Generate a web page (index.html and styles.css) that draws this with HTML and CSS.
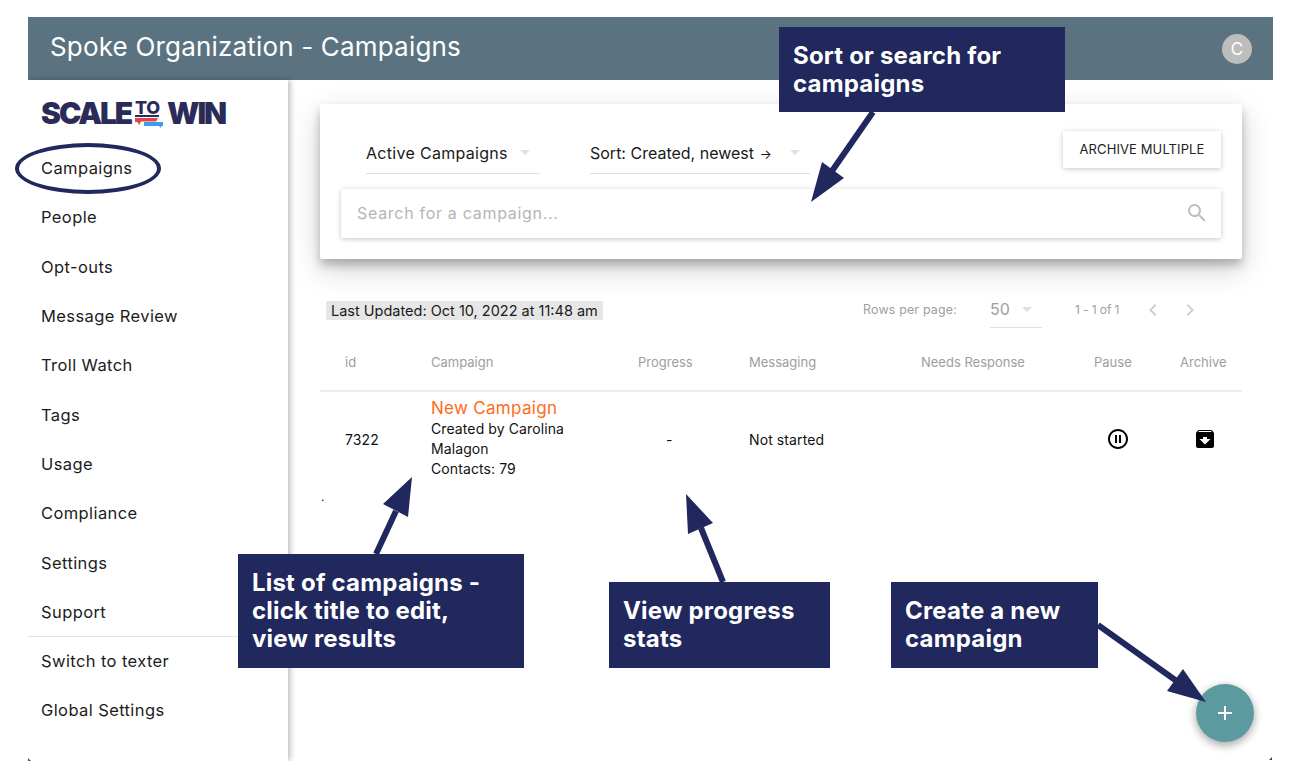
FILE: index.html
```html
<!DOCTYPE html>
<html lang="en">
<head>
<meta charset="utf-8">
<title>Spoke Organization - Campaigns</title>
<link rel="stylesheet" href="styles.css">
</head>
<body>
<div class="frame">
  <header class="topbar">
    <h1 class="title">Spoke Organization - Campaigns</h1>
    <span class="avatar">C</span>
  </header>
  <div class="layout">
    <aside class="sidebar">
      <div class="logo">
        <span class="logo-word">SCALE</span>
        <span class="logo-to">
          <span class="logo-to-text">TO</span>
          <svg class="logo-bubbles" viewBox="0 0 28 10" width="28" height="10" aria-hidden="true">
            <path d="M0 0H23L21 3.5H6L4 7L2.5 4H0Z" fill="#e2434b"/>
            <path d="M9 4H28V8H26V10L24 8H9Z" fill="#3d9be9"/>
          </svg>
        </span>
        <span class="logo-word">WIN</span>
      </div>
      <nav class="nav">
        <a class="nav-item">Campaigns</a>
        <a class="nav-item">People</a>
        <a class="nav-item">Opt-outs</a>
        <a class="nav-item">Message Review</a>
        <a class="nav-item">Troll Watch</a>
        <a class="nav-item">Tags</a>
        <a class="nav-item">Usage</a>
        <a class="nav-item">Compliance</a>
        <a class="nav-item">Settings</a>
        <a class="nav-item">Support</a>
        <div class="nav-divider"></div>
        <a class="nav-item">Switch to texter</a>
        <a class="nav-item">Global Settings</a>
      </nav>
    </aside>
    <main class="main">
      <section class="card">
        <div class="filters">
          <div class="select select-status"><span>Active Campaigns</span><i class="caret"></i></div>
          <div class="select select-sort"><span>Sort: Created, newest <span class="sort-arrow">→</span></span><i class="caret"></i></div>
          <button class="archive-btn">ARCHIVE MULTIPLE</button>
        </div>
        <div class="search">
          <span class="search-text">Search for a campaign...</span>
          <svg class="search-icon" viewBox="0 0 24 24" width="24" height="24" aria-hidden="true"><path fill="#bdbdbd" d="M15.5 14h-.79l-.28-.27A6.47 6.47 0 0 0 16 9.5 6.5 6.5 0 1 0 9.5 16c1.61 0 3.09-.59 4.23-1.57l.27.28v.79l5 4.99L20.49 19l-4.99-5zm-6 0C7.01 14 5 11.99 5 9.5S7.01 5 9.5 5 14 7.01 14 9.5 11.99 14 9.5 14z"/></svg>
        </div>
      </section>

      <div class="toolbar">
        <span class="updated">Last Updated: Oct 10, 2022 at 11:48 am</span>
        <span class="rows-label">Rows per page:</span>
        <div class="rows-select"><span>50</span><i class="caret"></i></div>
        <span class="range">1 - 1 of 1</span>
        <svg class="chev chev-prev" viewBox="0 0 24 24" width="24" height="24" aria-hidden="true"><path fill="#cfcfcf" d="M15.41 7.41 14 6l-6 6 6 6 1.41-1.41L10.83 12z"/></svg>
        <svg class="chev chev-next" viewBox="0 0 24 24" width="24" height="24" aria-hidden="true"><path fill="#cfcfcf" d="M10 6 8.59 7.41 13.17 12l-4.58 4.59L10 18l6-6z"/></svg>
      </div>

      <div class="table">
        <div class="thead">
          <span class="cell-id">id</span>
          <span>Campaign</span>
          <span>Progress</span>
          <span>Messaging</span>
          <span>Needs Response</span>
          <span>Pause</span>
          <span>Archive</span>
        </div>
        <div class="trow">
          <span class="cell-id">7322</span>
          <div class="cell-campaign">
            <a class="campaign-link">New Campaign</a>
            <div>Created by Carolina</div>
            <div>Malagon</div>
            <div>Contacts: 79</div>
          </div>
          <span class="cell-progress">-</span>
          <span>Not started</span>
          <span></span>
          <span class="cell-icon">
            <svg viewBox="0 0 24 24" width="24" height="24" aria-hidden="true"><path fill="#000" d="M9 16h2V8H9v8zm3-14C6.48 2 2 6.48 2 12s4.48 10 10 10 10-4.48 10-10S17.52 2 12 2zm0 18c-4.41 0-8-3.59-8-8s3.59-8 8-8 8 3.59 8 8-3.59 8-8 8zm1-4h2V8h-2v8z"/></svg>
          </span>
          <span class="cell-icon cell-icon-archive">
            <svg viewBox="0 0 24 24" width="24" height="24" aria-hidden="true"><path fill="#000" d="M20.54 5.23l-1.39-1.68C18.88 3.21 18.47 3 18 3H6c-.47 0-.88.21-1.16.55L3.46 5.23C3.17 5.57 3 6.02 3 6.5V19c0 1.1.9 2 2 2h14c1.1 0 2-.9 2-2V6.5c0-.48-.17-.93-.46-1.27zM12 17.5 6.5 12H10v-2h4v2h3.5L12 17.5zM5.12 5l.81-1h12l.94 1H5.12z"/></svg>
          </span>
        </div>
        <div class="stray-dot">.</div>
      </div>
    </main>
  </div>
  <button class="fab" aria-label="Create campaign">
    <svg viewBox="0 0 24 24" width="24" height="24" aria-hidden="true"><path fill="#fff" d="M19 13h-6v6h-2v-6H5v-2h6V5h2v6h6v2z"/></svg>
  </button>
</div>

<div class="nav-ring"></div>

<svg class="arrows" viewBox="0 0 1308 766" width="1308" height="766" aria-hidden="true">
  <g class="arrow">
    <line x1="873" y1="112" x2="832" y2="171"/>
    <polygon points="811,202 822,162 844,178"/>
  </g>
  <g class="arrow">
    <line x1="376" y1="554" x2="396" y2="511"/>
    <polygon points="412,477 383,504 408,517"/>
  </g>
  <g class="arrow">
    <line x1="723" y1="582" x2="701" y2="528"/>
    <polygon points="686,494 713,523 688,534"/>
  </g>
  <g class="arrow">
    <line x1="1098" y1="625" x2="1178" y2="682"/>
    <polygon points="1206,702 1183,669 1167,691"/>
  </g>
  <polygon class="corner-mark-left" points="28,758 31,761 28,761"/>
  <polygon class="corner-mark-right" points="1272,757 1272,760 1269,760"/>
</svg>

<div class="callout callout-sort">Sort or search for campaigns</div>
<div class="callout callout-list">List of campaigns - click title to edit, view results</div>
<div class="callout callout-stats">View progress stats</div>
<div class="callout callout-new">Create a new campaign</div>
</body>
</html>
```

FILE: styles.css
```css
* { box-sizing: border-box; }
html, body { margin: 0; padding: 0; background: #fff; }
body {
  width: 1308px;
  height: 766px;
  overflow: hidden;
  position: relative;
  font-family: Inter, "Noto Sans", "Liberation Sans", sans-serif;
  color: #1a1a1a;
}

.frame {
  position: relative;
  width: 1245px;
  height: 744px;
  margin: 17px 0 0 28px;
  display: flex;
  flex-direction: column;
  overflow: hidden;
}

.topbar {
  height: 63px;
  flex: none;
  background: #5b7380;
  display: flex;
  align-items: center;
  justify-content: space-between;
  padding: 0 21px 5px 22px;
  color: #fff;
}
.title { margin: 0; font-size: 26px; font-weight: 400; letter-spacing: 0.18px; }
.avatar {
  width: 30px;
  height: 30px;
  border-radius: 50%;
  background: #bdbdbd;
  color: #fff;
  font-size: 17px;
  display: flex;
  align-items: center;
  justify-content: center;
  margin-top: 5px;
}

.layout { flex: 1; display: flex; min-height: 0; }

.sidebar {
  width: 260px;
  flex: none;
  background: #fff;
  box-shadow: 2px 0 6px rgba(0,0,0,.28);
  z-index: 1;
}
.logo {
  height: 63.5px;
  padding: 18px 0 0 13px;
  display: flex;
  align-items: flex-start;
  gap: 4px;
  color: #2a2c57;
}
.logo-word { font-size: 30px; font-weight: 900; letter-spacing: -2.1px; line-height: 30px; }
.logo-to { display: flex; flex-direction: column; align-items: center; width: 28px; margin-top: 2px; }
.logo-to-text {
  font-size: 18px;
  font-weight: 800;
  line-height: 15px;
  letter-spacing: -0.5px;
  border-bottom: 2px solid #2a2c57;
  width: 24px;
  height: 17px;
  text-align: center;
  margin-right: 4px;
}
.logo-bubbles { display: block; margin-top: 1px; }

.nav { display: flex; flex-direction: column; }
.nav-item {
  height: 49.3px;
  display: flex;
  align-items: center;
  padding-left: 13px;
  font-size: 16.5px;
  letter-spacing: 0.4px;
  color: #1c1c1c;
}
.nav-divider { height: 1px; margin-bottom: -1px; background: #e3e3e3; }

.main { flex: 1; padding: 24px 31px 0 32px; min-width: 0; }

.card {
  height: 155px;
  background: #fff;
  border-radius: 2px;
  box-shadow: 0 10px 30px rgba(0,0,0,.19), 0 6px 10px rgba(0,0,0,.23);
  padding: 27px 21px 0;
}
.filters { display: flex; align-items: flex-start; height: 58px; }
.select {
  height: 42px;
  margin-top: 1px;
  display: flex;
  align-items: center;
  justify-content: space-between;
  border-bottom: 1px solid #e0e0e0;
  font-size: 16px;
  letter-spacing: 0.3px;
}
.select-status { width: 174px; margin-left: 25px; padding-right: 10px; }
.select-sort { width: 220px; margin-left: 50px; padding-right: 10px; letter-spacing: 0; }
.sort-arrow { font-size: 13px; margin-left: 1px; }
.caret {
  width: 0;
  height: 0;
  border-left: 5px solid transparent;
  border-right: 5px solid transparent;
  border-top: 5px solid #e0e0e0;
}
.archive-btn {
  margin-left: auto;
  width: 158px;
  height: 37px;
  background: #fff;
  border: 0;
  border-radius: 2px;
  box-shadow: 0 1px 6px rgba(0,0,0,.12), 0 1px 4px rgba(0,0,0,.12);
  font: inherit;
  font-size: 13px;
  letter-spacing: 0.1px;
  color: #222;
  padding: 0 0 2px;
}
.search {
  height: 49px;
  background: #fff;
  border-radius: 2px;
  box-shadow: 0 1px 6px rgba(0,0,0,.12), 0 1px 4px rgba(0,0,0,.12);
  display: flex;
  align-items: center;
  justify-content: space-between;
  padding: 0 12px 0 16px;
}
.search-text { font-size: 16px; letter-spacing: 0.7px; color: #b5b5b5; margin-top: -2px; }
.search-icon { margin-top: -1px; }

.toolbar {
  height: 38px;
  margin-top: 31px;
  display: flex;
  align-items: flex-start;
  padding-left: 6px;
}
.updated {
  margin-top: 11px;
  background: #e6e6e6;
  height: 19px;
  line-height: 19px;
  padding: 0 5px;
  width: 277px;
  font-size: 14.5px;
  white-space: nowrap;
}
.rows-label { margin: 12px 0 0 260px; font-size: 12.4px; letter-spacing: 0.2px; color: #9e9e9e; line-height: 16px; white-space: nowrap; width: 127px; }
.rows-select {
  width: 52px;
  height: 38px;
  padding-top: 9px;
  border-bottom: 1px solid #e0e0e0;
  display: flex;
  gap: 12px;
  align-items: center;
  font-size: 16px;
  color: #9e9e9e;
}
.rows-select span { margin-top: -9px; }
.rows-select .caret { margin-top: -8px; }
.range { margin: 12px 0 0 33px; font-size: 12px; letter-spacing: -0.1px; color: #9e9e9e; line-height: 16px; white-space: nowrap; width: 66px; }
.chev { margin-top: 8px; flex: none; }
.chev-next { margin-left: 13px; }

.thead, .trow {
  display: grid;
  grid-template-columns: 111px 207px 111px 172px 173px 86px 62px;
}
.cell-id { padding-left: 25px; }
.thead {
  height: 64px;
  padding-top: 6px;
  align-items: center;
  border-bottom: 2px solid #ececec;
  font-size: 13px;
  color: #9e9e9e;
}
.trow {
  align-items: center;
  padding: 6px 0 0;
  height: 88px;
  font-size: 14px;
  letter-spacing: 0.1px;
  color: #111;
}
.cell-campaign { line-height: 20px; margin-top: -1px; }
.campaign-link { display: block; font-size: 17px; line-height: 21px; color: #ff6b1a; letter-spacing: 0.3px; }
.cell-progress { padding-left: 28px; }
.cell-icon { display: flex; padding-left: 12px; }
.cell-icon-archive { padding-left: 13px; }
.stray-dot { margin: 10px 0 0 1px; font-size: 12px; line-height: 14px; }

.fab {
  position: absolute;
  left: 1168px;
  top: 667px;
  width: 58px;
  height: 58px;
  border: 0;
  border-radius: 50%;
  background: #5d9a9f;
  box-shadow: 0 3px 10px rgba(0,0,0,.16), 0 3px 10px rgba(0,0,0,.23);
  display: flex;
  align-items: center;
  justify-content: center;
  padding: 0;
}

.nav-ring {
  position: absolute;
  left: 15px;
  top: 143px;
  width: 146px;
  height: 51px;
  border: 4px solid #20285e;
  border-radius: 50%;
  z-index: 2;
}
.arrows { position: absolute; left: 0; top: 0; z-index: 2; pointer-events: none; }
.arrow line { stroke: #20285e; stroke-width: 6; }
.arrow polygon { fill: #20285e; }
.corner-mark-left { fill: #5a3ea0; }
.corner-mark-right { fill: #444; }

.callout {
  position: absolute;
  z-index: 3;
  background: #20285e;
  color: #fff;
  font-size: 24px;
  font-weight: 700;
  line-height: 28px;
  letter-spacing: 0.2px;
  padding: 15px 14px;
}
.callout-sort { left: 779px; top: 27px; width: 286px; height: 85px; }
.callout-list { left: 238px; top: 554px; width: 286px; height: 114px; }
.callout-stats { left: 609px; top: 582px; width: 221px; height: 86px; }
.callout-new { left: 891px; top: 582px; width: 207px; height: 86px; }
```
